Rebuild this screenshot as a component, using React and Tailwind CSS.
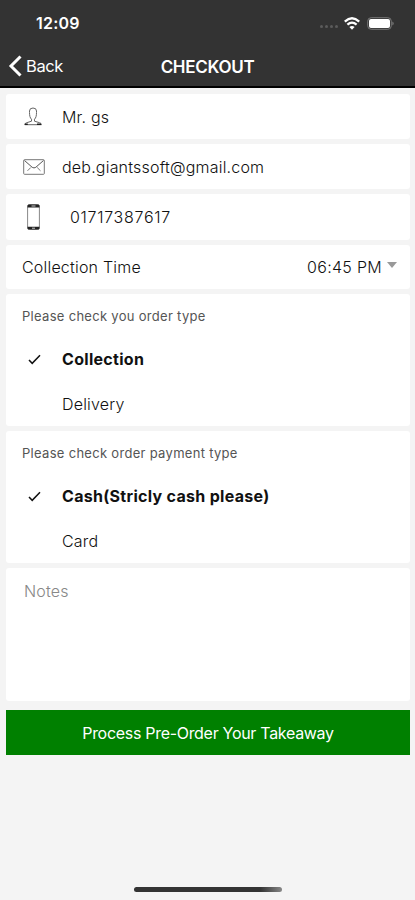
import React, { useState } from 'react';

const UserIcon = () => (
  <svg className="h-[19px] w-[19px]" viewBox="0 0 19 19" fill="none" stroke="#666666" strokeWidth="1">
    <path d="M7.500 12.200C6 11 5.500 8.500 5.500 5.500v-1.500Q5.500 1 9 1t3.500 3v1.500c0 3-.5 5.500-2 6.700v2l5 1.500c1.200.4 2 .9 2 2H.8c0-1.100.8-1.600 2-2l4.700-1.500z" />
    <path d="M.8 17.300h3M13 17.300h4" stroke="#222222" strokeWidth="1.600" />
  </svg>
);

const MailIcon = () => (
  <svg className="h-4 w-[22px]" viewBox="0 0 22 16" fill="none" stroke="#777777" strokeWidth="1">
    <rect x="0.700" y="0.700" width="20.600" height="14.600" rx="0.800" />
    <path d="M1.500 1.500l7.700 6.800q1.800 1.300 3.600 0l7.700-6.800" stroke="#555555" />
    <path d="M4.500 11.800l3.300-3.300M17.500 11.800l-3.300-3.300" />
  </svg>
);

const PhoneIcon = () => (
  <svg className="h-[26px] w-[13px]" viewBox="0 0 13 26" fill="none">
    <rect x="0.600" y="0.600" width="11.800" height="24.800" rx="1.600" stroke="#888888" />
    <path d="M.5 3.500V2Q.5.500 2 .5h9q1.500 0 1.500 1.500v1.500zM.5 22.800V24q0 1.500 1.500 1.500h9q1.500 0 1.500-1.500v-1.200z" fill="#222222" />
    <path d="M4.500 2h4M5 24.200h3" stroke="#cccccc" strokeWidth="1" />
  </svg>
);

const CheckIcon = () => (
  <svg className="h-[11px] w-[13px]" viewBox="0 0 13 11" fill="none" stroke="#111111" strokeWidth="1.500">
    <path d="M1 6l3.200 3.300L12 1.200" />
  </svg>
);

function StatusBar() {
  return (
    <div className="flex h-[46px] items-center pl-9 pr-[21px]">
      <span className="flex-1 text-[16px] font-semibold leading-5">12:09</span>
      <div className="mt-[7px] flex gap-[2px]">
        <i className="h-[3px] w-[3px] rounded-full bg-[#5c5c5c]" />
        <i className="h-[3px] w-[3px] rounded-full bg-[#5c5c5c]" />
        <i className="h-[3px] w-[3px] rounded-full bg-[#5c5c5c]" />
        <i className="h-[3px] w-[3px] rounded-full bg-[#5c5c5c]" />
      </div>
      <svg className="ml-1.5 h-[13px] w-4" viewBox="0 0 16 13" fill="none" stroke="#ffffff" strokeWidth="2.300">
        <path d="M.8 4.600Q8-2 15.200 4.600M3.400 7.600Q8 3.600 12.600 7.600" />
        <path d="M5.400 10Q8 7.800 10.600 10L8 12.700z" fill="#ffffff" stroke="none" />
      </svg>
      <svg className="ml-[7px] h-[13px] w-[27px]" viewBox="0 0 27 13">
        <rect x="0.700" y="0.700" width="23.600" height="11.600" rx="3.500" fill="none" stroke="#777777" />
        <rect x="2" y="2" width="21" height="9" rx="2" fill="#ffffff" />
        <path d="M25.300 4.500q1.400.5 1.400 2t-1.400 2z" fill="#777777" />
      </svg>
    </div>
  );
}

function OptionGroup({ title, options, value, onChange }) {
  return (
    <section className="rounded-[3px] bg-white pt-3">
      <h2 className="pl-4 text-[13px] font-normal leading-5 tracking-[0.3px] text-[#555555]">{title}</h2>
      <div className="pt-[11px]">
        {options.map((option) => (
          <button key={option} className="flex h-[44.5px] w-full items-center text-left" onClick={() => onChange(option)}>
            <span className="flex w-14 justify-center">{value === option && <CheckIcon />}</span>
            <span className={value === option ? 'font-bold tracking-[0.3px] text-[#111111]' : ''}>{option}</span>
          </button>
        ))}
      </div>
    </section>
  );
}

export default function App() {
  const [orderType, setOrderType] = useState('Collection');
  const [payment, setPayment] = useState('Cash(Stricly cash please)');

  return (
    <div className="flex h-[900px] w-[415px] flex-col bg-[#f4f4f4] font-['Inter',sans-serif] text-[16px] font-light tracking-[0.2px] text-[#111111]">
      <header className="h-[88px] border-b-2 border-black bg-[#333333] text-white">
        <StatusBar />
        <div className="grid h-10 grid-cols-3 items-center">
          <button className="flex items-center gap-1 pl-2">
            <svg className="h-[22px] w-[14px]" viewBox="0 0 14 22" fill="none" stroke="#ffffff" strokeWidth="3">
              <path d="M12.500 1.500L3 11l9.500 9.500" />
            </svg>
            <span className="text-[16.500px] font-normal tracking-[-0.4px]">Back</span>
          </button>
          <h1 className="pt-[3px] text-center text-[17px] font-semibold tracking-[-0.3px]">CHECKOUT</h1>
        </div>
      </header>

      <main className="flex flex-col gap-[5px] pl-1.5 pr-[5px] pt-1.5">
        {/* Customer details */}
        <div className="flex h-[45px] items-center rounded-[3px] bg-white">
          <span className="flex w-[55px] justify-center"><UserIcon /></span>
          <span className="pl-px">Mr. gs</span>
        </div>
        <div className="flex h-[45px] items-center rounded-[3px] bg-white">
          <span className="flex w-[55px] justify-center"><MailIcon /></span>
          <span className="pl-px">deb.giantssoft@gmail.com</span>
        </div>
        <div className="flex h-[46px] items-center rounded-[3px] bg-white">
          <span className="mr-2 flex w-[55px] justify-center"><PhoneIcon /></span>
          <span className="pl-px tracking-[0.7px]">01717387617</span>
        </div>
        <div className="flex h-11 items-center rounded-[3px] bg-white pl-4 pr-[13px]">
          <span className="flex-1">Collection Time</span>
          <span className="tracking-[0.3px]">06:45 PM</span>
          <svg className="mb-1 ml-[5px] h-[6px] w-[10px]" viewBox="0 0 10 6">
            <path d="M0 0h10L5 6z" fill="#999999" />
          </svg>
        </div>

        <OptionGroup title="Please check you order type" options={['Collection', 'Delivery']} value={orderType} onChange={setOrderType} />
        <OptionGroup title="Please check order payment type" options={['Cash(Stricly cash please)', 'Card']} value={payment} onChange={setPayment} />

        <textarea
          className="block h-[133px] resize-none rounded-[3px] bg-white px-[18px] pt-[11px] leading-6 outline-none placeholder:text-[#888888]"
          placeholder="Notes"
        />
        <button className="mt-1 h-[45px] bg-[#008000] font-normal tracking-[-0.3px] text-white">Process Pre-Order Your Takeaway</button>
      </main>

      <div className="mx-auto mb-2 mt-auto h-[5px] w-[148px] rounded-full bg-gradient-to-r from-[#333333] from-85% to-[#888888]" />
    </div>
  );
}
